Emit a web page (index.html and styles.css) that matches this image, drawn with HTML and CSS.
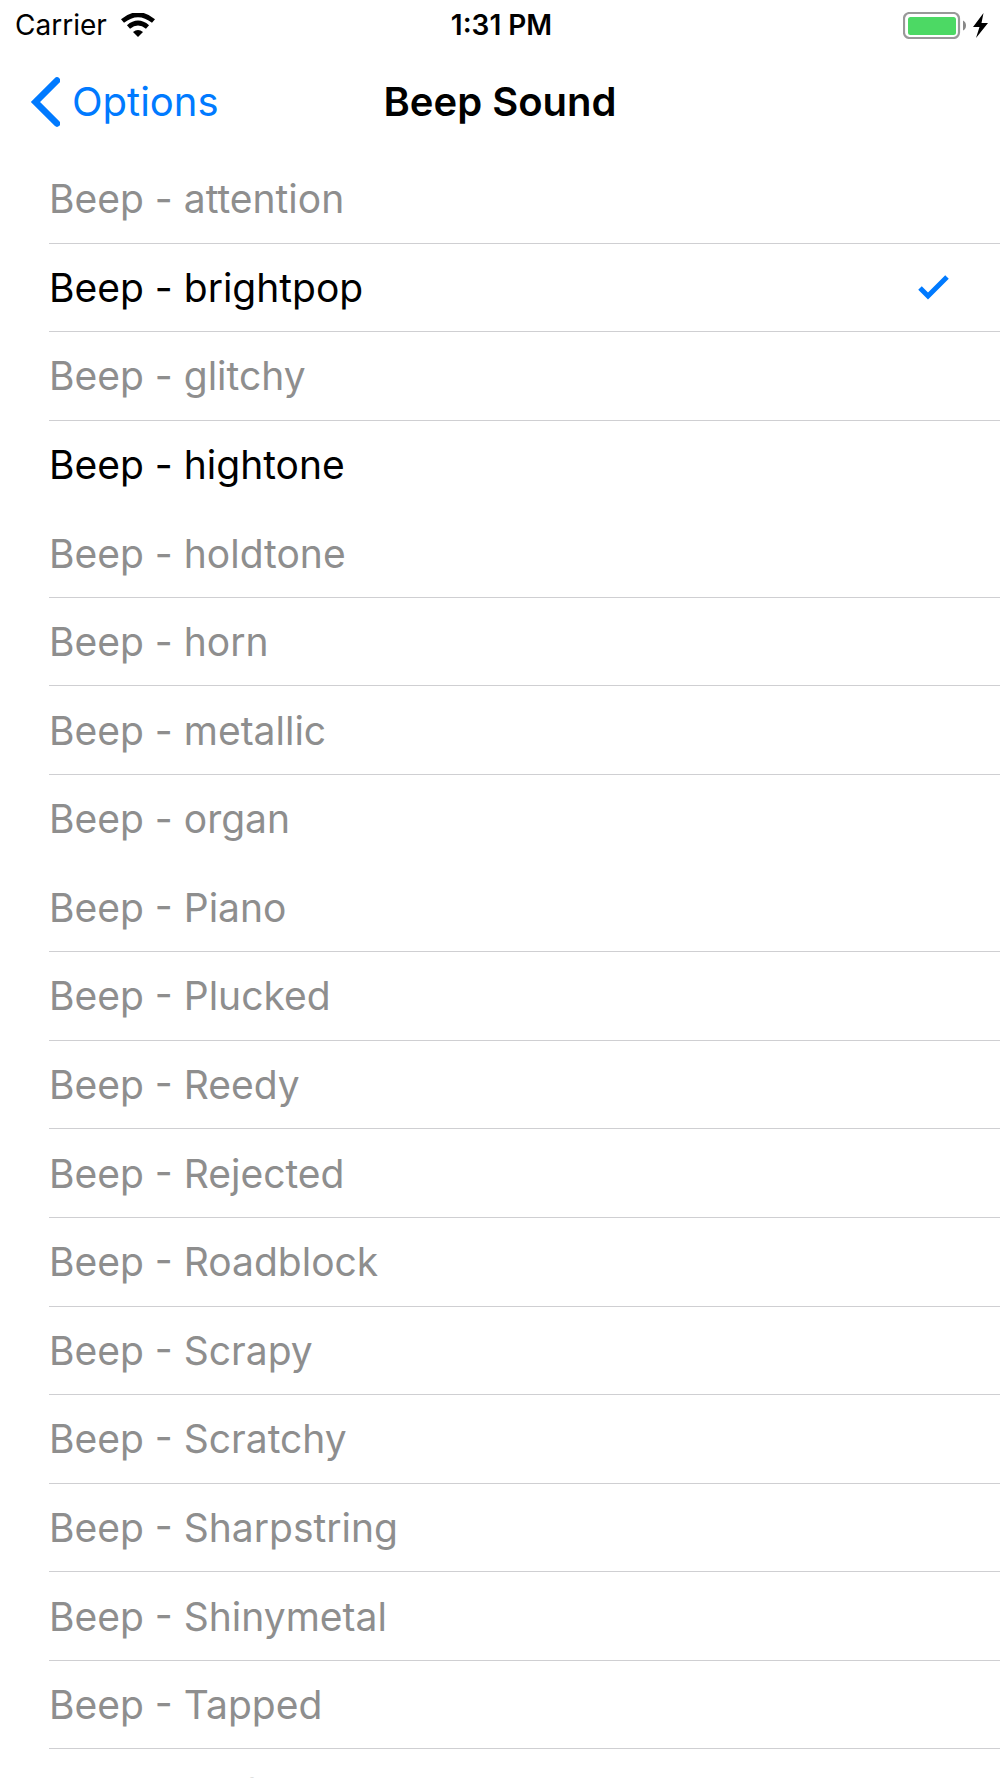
FILE: index.html
```html
<!DOCTYPE html>
<html lang="en">
<head>
    <meta charset="UTF-8">
    <meta name="viewport" content="width=device-width, initial-scale=1.0">
    <title>Beep Sound</title>

    <link rel="stylesheet" href="styles.css">
</head>
<body>
    <div class="status-bar">
        <div class="carrier">
            <span>Carrier</span>
            <svg class="wifi" viewBox="0 0 34 24" width="34" height="24">
                <path d="M1.500 8 Q17 -4.600 32.500 8" fill="none" stroke="#000" stroke-width="4.800"/>
                <path d="M7.500 14 Q17 6 26.500 14" fill="none" stroke="#000" stroke-width="4.800"/>
                <path d="M12 19 Q17 15 22 19 L17 24 Z"/>
            </svg>
        </div>
        <div class="time">1:31 PM</div>
        <div class="power">
            <svg class="battery" viewBox="0 0 85 27" width="85" height="27">
                <rect x="1" y="1" width="55" height="25" rx="5.500" fill="#fff" stroke="#999" stroke-width="2.200"/>
                <rect x="5" y="5" width="48" height="18" rx="2.500" fill="#4cd964"/>
                <path d="M60 8.500 Q63 10 63 13.500 Q63 17 60 18.500 Z" fill="#888"/>
                <path d="M80.500 1 L70 15 H76.500 L73 26 L85 11 H78.500 Z"/>
            </svg>
        </div>
    </div>

    <header class="nav-bar">
        <a class="back" href="#">
            <svg viewBox="0 0 30 50" width="30" height="50">
                <path d="M27 3.500 L5.500 25 L27 46.500" fill="none" stroke="#007aff" stroke-width="6.600" stroke-linecap="round"/>
            </svg>
            Options
        </a>
        <h1>Beep Sound</h1>
    </header>

    <form id="sound-list" class="sound-list"></form>

<script>
    const sounds = [
        { name: "attention" },
        { name: "brightpop", enabled: true, selected: true },
        { name: "glitchy" },
        { name: "hightone", enabled: true, noLine: true },
        { name: "holdtone" },
        { name: "horn" },
        { name: "metallic" },
        { name: "organ", noLine: true },
        { name: "Piano" },
        { name: "Plucked" },
        { name: "Reedy" },
        { name: "Rejected" },
        { name: "Roadblock" },
        { name: "Scrapy" },
        { name: "Scratchy" },
        { name: "Sharpstring" },
        { name: "Shinymetal" },
        { name: "Tapped" },
        { name: "Tinf" }
    ];

    function renderSounds() {
        let soundHTML = '';
        sounds.forEach(sound => {
            soundHTML += `
                <label class="sound ${sound.noLine ? 'no-line' : ''}">
                    <input type="radio" name="sound" value="${sound.name}" ${sound.selected ? 'checked' : ''} ${sound.enabled ? '' : 'disabled'}>
                    <span class="name">Beep - ${sound.name}</span>
                    <svg class="check" viewBox="0 0 32 28" width="32" height="28">
                        <path d="M2 15 L10 23 L29 4" fill="none" stroke="#007aff" stroke-width="5"/>
                    </svg>
                </label>
            `;
        });
        document.getElementById("sound-list").innerHTML = soundHTML;
    }

    renderSounds();
</script>
</body>
</html>
```
FILE: styles.css
```css
* {
    box-sizing: border-box;
}

body {
    font-family: Inter, "Liberation Sans", sans-serif;
    font-size: 39px;
    background-color: #fff;
    color: #000;
    display: flex;
    flex-direction: column;
    height: 100vh;
    margin: 0;
    overflow: hidden;
}

.status-bar {
    flex: none;
    display: grid;
    grid-template-columns: 1fr auto 1fr;
    align-items: center;
    height: 50px;
    padding: 0 12px 0 15px;
    font-size: 28px;
}

.carrier {
    display: flex;
    align-items: center;
    gap: 14px;
}

.time {
    font-weight: 600;
}

.power {
    display: flex;
    justify-content: flex-end;
}

.nav-bar {
    flex: none;
    display: grid;
    grid-template-columns: 1fr auto 1fr;
    align-items: center;
    height: 105px;
    padding: 0 30px 2px;
    font-size: 40px;
}

.back {
    display: flex;
    align-items: center;
    gap: 12px;
    color: #007aff;
    text-decoration: none;
}

h1 {
    font-size: 40px;
    font-weight: 600;
    margin: 0;
}

/* the last row runs off the bottom of the screen */
.sound-list {
    flex: 1;
    display: grid;
    grid-auto-rows: minmax(max-content, 1fr);
    margin: 0 0 -60px 49px;
}

.sound {
    display: flex;
    align-items: center;
    justify-content: space-between;
    padding-right: 50px;
    border-bottom: 1px solid #cfcfd2;
    color: #8e8e8e;
}

.sound.no-line {
    border-bottom-color: transparent;
}

.sound:has(input:enabled) {
    color: #000;
    cursor: pointer;
}

.sound input {
    appearance: none;
    width: 0;
    height: 0;
    margin: 0;
}

.name {
    flex: 1;
}

.check {
    visibility: hidden;
}

.sound input:checked ~ .check {
    visibility: visible;
}
```
